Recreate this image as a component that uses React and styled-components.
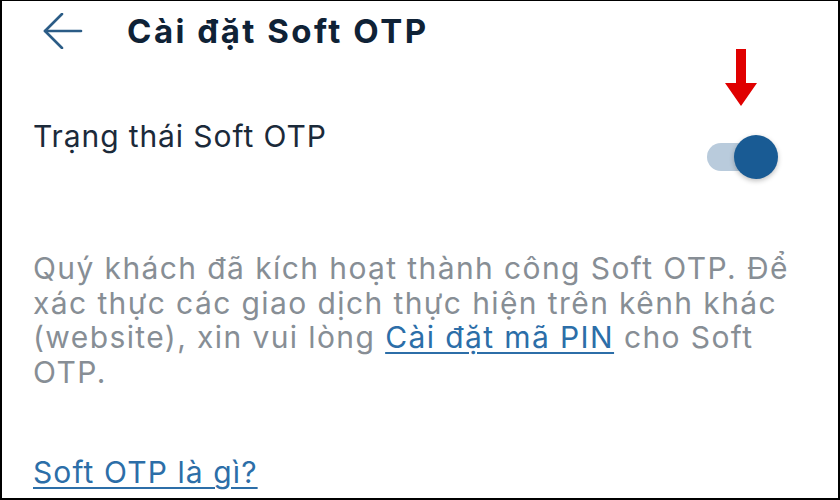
import React from 'react';
import styled, { createGlobalStyle } from 'styled-components';

const GlobalStyle = createGlobalStyle`
    * {
        box-sizing: border-box;
    }
    body {
        margin: 0;
        background: #ffffff;
        font-family: Inter, "Noto Sans", sans-serif;
    }
`;

const Frame = styled.div`
    position: relative;
    width: 840px;
    height: 500px;
    background: #ffffff;
    border: 2px solid #000000;
    border-top-width: 1px;
    overflow: hidden;
    display: flex;
    flex-direction: column;
`;

const Header = styled.div`
    height: 60px;
    display: flex;
    align-items: center;
    padding-left: 41px;
    gap: 44px;
`;

const BackIcon = styled.svg`
    width: 40px;
    height: 36px;
    flex-shrink: 0;
`;

const Title = styled.h1`
    margin: 0;
    font-size: 33px;
    line-height: 1;
    font-weight: 700;
    color: #0f2236;
    letter-spacing: 2.5px;
`;

const StatusRow = styled.div`
    margin-top: 58px;
    display: flex;
    align-items: flex-start;
    justify-content: space-between;
    padding: 0 60px 0 31px;
`;

const Label = styled.div`
    font-size: 30px;
    line-height: 35px;
    letter-spacing: 0.9px;
    color: #1b2a3a;
`;

const Switch = styled.div`
    position: relative;
    margin-top: 16px;
    width: 71px;
    height: 44px;
`;

const Track = styled.div`
    position: absolute;
    left: 0;
    top: 8px;
    width: 60px;
    height: 28px;
    border-radius: 14px;
    background: #b9cbdc;
`;

const Knob = styled.div`
    position: absolute;
    right: 0;
    top: 0;
    width: 44px;
    height: 44px;
    border-radius: 50%;
    background: #195b94;
    box-shadow: 0 2px 5px rgba(0, 0, 0, 0.25);
`;

const Description = styled.p`
    margin: 72px 0 0;
    padding-left: 31px;
    font-size: 30px;
    line-height: 34.5px;
    letter-spacing: 1.4px;
    color: #878e95;
    white-space: nowrap;
`;

const Link = styled.a`
    color: #2c6ea8;
    text-decoration: underline;
    text-decoration-thickness: 1.5px;
    text-underline-offset: 4px;
    cursor: pointer;
`;

const HelpLink = styled(Link)`
    display: block;
    margin: 66px 0 0 31px;
    font-size: 30px;
    line-height: 35px;
    letter-spacing: 1.1px;
`;

const Marker = styled.svg`
    position: absolute;
    left: 722px;
    top: 48px;
    width: 34px;
    height: 58px;
`;

export default function App() {
    return (
        <>
            <GlobalStyle />
            <Frame>
                <Header>
                    <BackIcon viewBox="0 0 40 36" fill="none" stroke="#2b5c86" strokeWidth="2.6" strokeLinecap="round" strokeLinejoin="round">
                        <path d="M38 18H2" />
                        <path d="M19 1L2 18l17 17" />
                    </BackIcon>
                    <Title>Cài đặt Soft OTP</Title>
                </Header>
                <StatusRow>
                    <Label>Trạng thái Soft OTP</Label>
                    <Switch>
                        <Track />
                        <Knob />
                    </Switch>
                </StatusRow>
                <Description>
                    Quý khách đã kích hoạt thành công Soft OTP. Để
                    <br />
                    xác thực các giao dịch thực hiện trên kênh khác
                    <br />
                    (website), xin vui lòng <Link>Cài đặt mã PIN</Link> cho Soft
                    <br />
                    OTP.
                </Description>
                <HelpLink>Soft OTP là gì?</HelpLink>
                <Marker viewBox="0 0 34 58">
                    <polygon points="12,0 22,0 22,34 33,34 17,57 1,34 12,34" fill="#e00000" />
                </Marker>
            </Frame>
        </>
    );
}
